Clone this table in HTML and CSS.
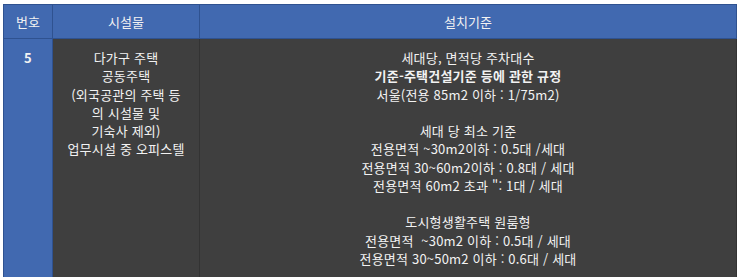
FILE: index.html
```html
<!DOCTYPE html>
<html lang="ko">
<head>
<meta charset="utf-8">
<link rel="stylesheet" href="styles.css">
</head>
<body>
<table class="spec">
  <colgroup>
    <col class="c-no">
    <col class="c-fac">
    <col class="c-std">
  </colgroup>
  <thead>
    <tr>
      <th>번호</th>
      <th>시설물</th>
      <th>설치기준</th>
    </tr>
  </thead>
  <tbody>
    <tr>
      <td class="no">5</td>
      <td class="body">다가구 주택<br>공동주택<br>(외국공관의 주택 등<br>의 시설물 및<br>기숙사 제외)<br>업무시설 중 오피스텔</td>
      <td class="body">세대당, 면적당 주차대수<br><b>기준-주택건설기준 등에 관한 규정</b><br>서울(전용 85m2 이하 : 1/75m2)<br><br>세대 당 최소 기준<br>전용면적 ~30m2이하 : 0.5대 /세대<br>전용면적 30~60m2이하 : 0.8대 / 세대<br>전용면적 60m2 초과 ": 1대 / 세대<br><br>도시형생활주택 원룸형<br>전용면적&nbsp; ~30m2 이하 : 0.5대 / 세대<br>전용면적 30~50m2 이하 : 0.6대 / 세대</td>
    </tr>
  </tbody>
</table>
</body>
</html>
```

FILE: styles.css
```css
html, body {
  margin: 0;
  padding: 0;
  background: #ffffff;
}
body {
  padding: 4px 0 0 3px;
  font-family: "Noto Sans CJK KR", "Noto Sans", sans-serif;
  font-size: 13px;
  color: #f2f2f2;
}
.spec {
  border-collapse: collapse;
  width: 733px;
  table-layout: fixed;
}
.c-no { width: 49px; }
.c-fac { width: 147px; }
.c-std { width: 537px; }
.spec th {
  background: #4169b0;
  border: 1px solid #2f5290;
  height: 33px;
  padding: 0;
  font-weight: normal;
  text-align: center;
  vertical-align: middle;
  line-height: 18px;
}
.spec td {
  background: #3f3f3f;
  border: 1px solid #333333;
  padding: 10px 0 9px;
  text-align: center;
  vertical-align: top;
  line-height: 18.27px;
  letter-spacing: 0.2px;
}
.spec td.no {
  background: #4169b0;
  border-color: #2f5290;
  font-weight: bold;
}
.spec td b {
  font-weight: bold;
}
```
